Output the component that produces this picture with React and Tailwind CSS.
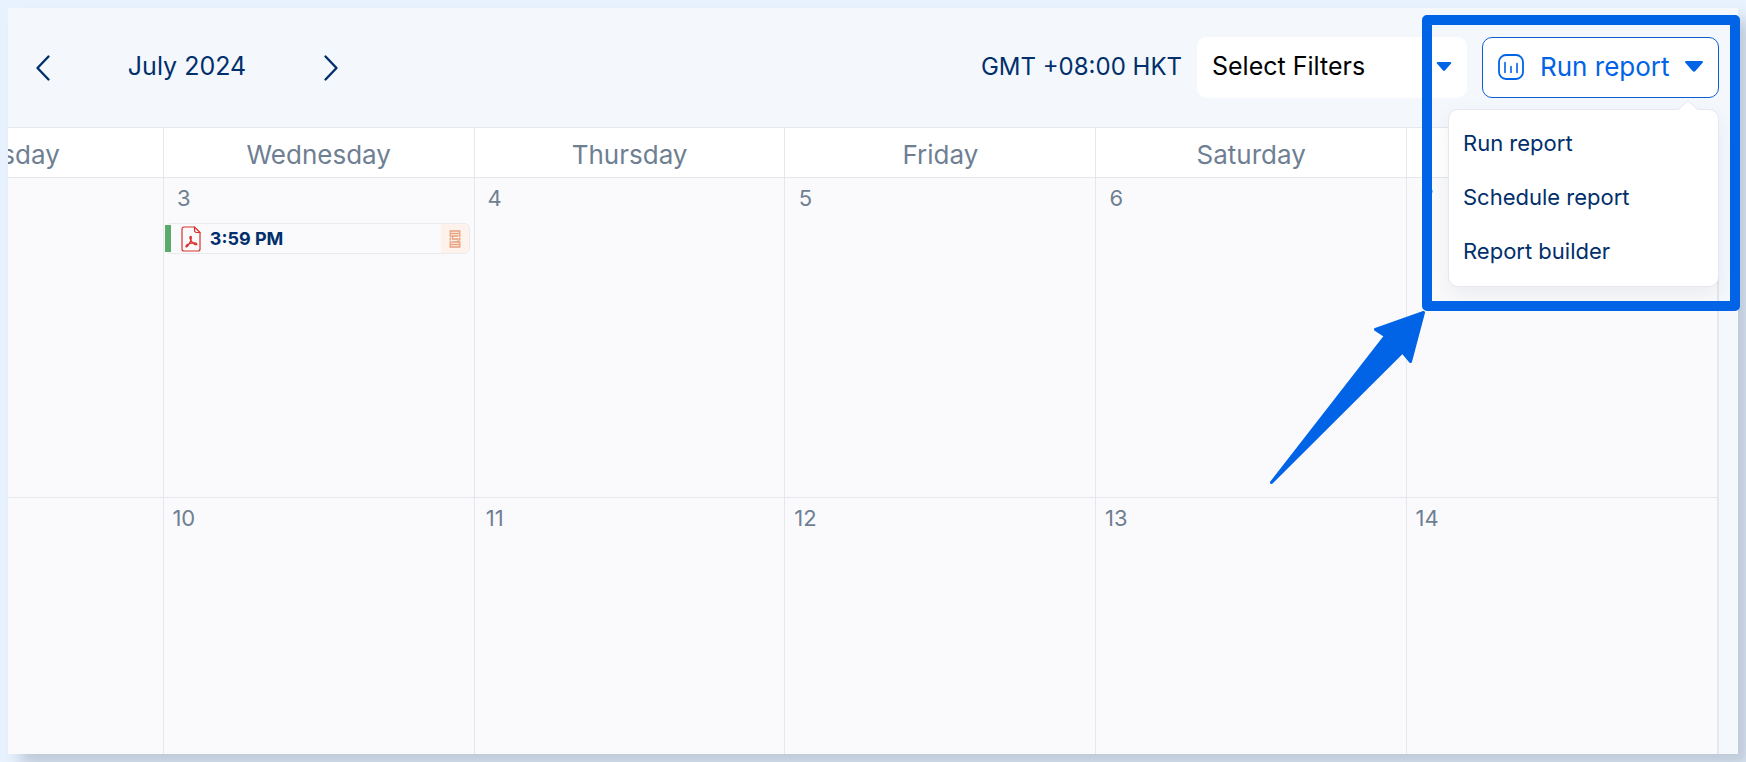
import React, { useState } from 'react';

const dayNames = ['Tuesday', 'Wednesday', 'Thursday', 'Friday', 'Saturday', ''];

const weeks = [
  [null, 3, 4, 5, 6, 7],
  [null, 10, 11, 12, 13, 14],
];

const events = {
  3: { time: '3:59 PM', type: 'pdf' },
};

const menuItems = ['Run report', 'Schedule report', 'Report builder'];

function Caret({ className }) {
  return (
    <svg className={className} viewBox="0 0 18 11" fill="currentColor" aria-hidden="true">
      <path d="M1.2 0h15.6c1 0 1.5 1.1.8 1.8l-7.2 8.3a1.9 1.9 0 0 1-2.8 0L.4 1.8C-.3 1.1.2 0 1.2 0z" />
    </svg>
  );
}

function Chevron({ direction }) {
  return (
    <svg width="16" height="28" viewBox="0 0 16 28" fill="none" stroke="currentColor" strokeWidth="2.4" strokeLinecap="round" strokeLinejoin="round" aria-hidden="true">
      <path d={direction === 'left' ? 'M13.500 2.500 2.500 14l11 11.500' : 'M2.500 2.500l11 11.500L2.500 25.500'} />
    </svg>
  );
}

function ReportIcon() {
  return (
    <svg width="26" height="26" viewBox="0 0 26 26" fill="none" stroke="currentColor" strokeLinecap="round" aria-hidden="true">
      <rect x="1" y="1" width="24" height="24" rx="7" strokeWidth="1.8" />
      <path d="M7 8.500v10M13 12.500v6M19 9.500v9" strokeWidth="1.600" />
    </svg>
  );
}

function PdfIcon() {
  return (
    <svg width="20" height="26" viewBox="0 0 20 26" fill="none" stroke="#d9322b" strokeLinejoin="round" strokeLinecap="round" aria-hidden="true">
      <path d="M13.500 1H3a2 2 0 0 0-2 2v20a2 2 0 0 0 2 2h14a2 2 0 0 0 2-2V6.500z" strokeWidth="1.200" />
      <path d="M13.500 1v3.500a2 2 0 0 0 2 2H19" strokeWidth="1.200" />
      <path d="M9.800 10.500c-1.300 0-1 1.700-.2 3.200.9 1.800 2.600 3.700 4.200 4.700 1.200.7 2.300.3 2-.5-.4-1-3.200-1.100-5.400-.7-2 .4-4.700 1.600-5.300 2.800-.4.900.5 1.300 1.300.4 1.200-1.300 2.700-3.900 3.400-6 .5-1.700.8-3.900 0-3.900z" strokeWidth="1.300" />
    </svg>
  );
}

function TicketIcon() {
  return (
    <svg width="12" height="18" viewBox="0 0 12 18" fill="none" stroke="#e5a07c" strokeWidth="1.300" aria-hidden="true">
      <path d="M.6 1h10.800M.6 17h10.800M2 3.500h8M2 14.500h8M1.200 1v5M10.800 1v5M1.200 12v5M10.800 12v5M.6 6h2M9.400 6h2M.6 12h2M9.400 12h2M9 6H3.500v3h5.500v3H3M1.200 7.500v3M10.800 7.500v3" />
    </svg>
  );
}

function CalendarEvent({ time }) {
  return (
    <button type="button" className="mt-[11px] ml-px flex h-[31px] w-[calc(100%-5px)] items-center rounded-md border border-[#e8eaee] text-[#012f6b]">
      <span className="-ml-px h-[27px] w-1.5 bg-[#5aaa6a]" />
      <span className="ml-2.5">
        <PdfIcon />
      </span>
      <span className="ml-[9px] text-[18px] font-bold">{time}</span>
      <span className="ml-auto flex h-full w-7 items-center justify-center rounded-r-md bg-[#fdf3ec]">
        <TicketIcon />
      </span>
    </button>
  );
}

function ReportMenu() {
  return (
    <div className="absolute top-[calc(100%+11px)] right-0 z-20 w-[271px] rounded-[10px] border border-[#e6e8f0] bg-white pt-1.5 pb-2 shadow-[0_8px_20px_rgba(40,50,80,0.07)]">
      <svg className="absolute -top-2.5 right-5 h-[11px] w-5" viewBox="0 0 20 11" aria-hidden="true">
        <path d="M0 10 10 .7 20 10v1H0z" fill="#fff" />
        <path d="M0 10 10 .7 20 10" fill="none" stroke="#e6e8f0" />
      </svg>
      <ul>
        {menuItems.map((item) => (
          <li key={item}>
            <button type="button" className="h-[54px] w-full px-3.5 text-left text-[22px] text-[#012f6b]">
              {item}
            </button>
          </li>
        ))}
      </ul>
    </div>
  );
}

export default function App() {
  const [menuOpen, setMenuOpen] = useState(true);

  return (
    <div className="relative h-screen overflow-hidden bg-[#e8f2fe] p-2 font-['Inter','Open_Sans',sans-serif]">
      <div className="flex h-full flex-col bg-[#f4f8fd] shadow-[12px_12px_14px_rgba(50,65,90,0.22)]">
        {/* Toolbar */}
        <header className="flex h-[119px] shrink-0 items-center pr-[19px] pl-[27px] text-[25px] text-[#012f6b]">
          <button type="button" aria-label="Previous month">
            <Chevron direction="left" />
          </button>
          <h1 className="w-[272px] pb-0.5 text-center">July 2024</h1>
          <button type="button" aria-label="Next month">
            <Chevron direction="right" />
          </button>

          <div className="ml-auto flex items-center gap-[15px]">
            <span className="pb-0.5 text-[24px]">GMT +08:00 HKT</span>
            <div className="relative">
              <select aria-label="Select Filters" className="h-[61px] w-[270px] appearance-none rounded-[10px] bg-white px-[15px] pb-0.5 text-black">
                <option>Select Filters</option>
              </select>
              <Caret className="pointer-events-none absolute top-[25px] right-[15px] h-[9px] w-4 text-[#0163e6]" />
            </div>
            <div className="relative">
              <button
                type="button"
                aria-expanded={menuOpen}
                onClick={() => setMenuOpen(!menuOpen)}
                className="flex h-[61px] w-[237px] items-center rounded-[10px] border border-[#0b5fd0] bg-white px-[15px] pb-0.5 text-[26px] text-[#0163e6]"
              >
                <ReportIcon />
                <span className="ml-4">Run report</span>
                <Caret className="ml-auto h-[11px] w-[18px]" />
              </button>
              {menuOpen && <ReportMenu />}
            </div>
          </div>
        </header>

        {/* Month grid, scrolled to its right end */}
        <main className="flex min-h-0 flex-1 items-start justify-end overflow-hidden pr-[19px]">
          <table className="w-[calc(100%+156px)] shrink-0 table-fixed border-separate border-spacing-0 border-r-2 border-[#e4e7ec]">
            <thead>
              <tr>
                {dayNames.map((day) => (
                  <th key={day} scope="col" className="h-[50px] border-t border-l border-[#e4e7ec] bg-white p-0 pt-1 text-[26px] leading-9 font-normal text-[#6f7f93]">
                    {day}
                  </th>
                ))}
              </tr>
            </thead>
            <tbody>
              {weeks.map((week, i) => (
                <tr key={i}>
                  {week.map((date, j) => (
                    <td key={j} className="h-80 border-t border-l border-[#e4e7ec] bg-[#fafafc] p-0 align-top">
                      <div className="mt-1 h-[30px] w-10 text-center text-[22px] leading-8 text-[#6f7f93]">{date}</div>
                      {events[date] && <CalendarEvent time={events[date].time} />}
                    </td>
                  ))}
                </tr>
              ))}
            </tbody>
          </table>
        </main>
      </div>

      {/* Callout around the report menu */}
      <div className="pointer-events-none absolute top-[15px] right-1.5 z-30 h-[296px] w-[318px] rounded-[5px] border-10 border-[#0163e6]" />
      <svg className="pointer-events-none absolute top-[308px] right-[318px] z-30 h-[180px] w-40" viewBox="0 0 160 180" aria-hidden="true">
        <path
          d="M155.500 4.500 107.500 21.500 117.500 28 3.500 174.500 134.500 44 142.500 53.500z"
          fill="#0163e6"
          stroke="#0163e6"
          strokeWidth="3"
          strokeLinejoin="round"
        />
      </svg>
    </div>
  );
}
